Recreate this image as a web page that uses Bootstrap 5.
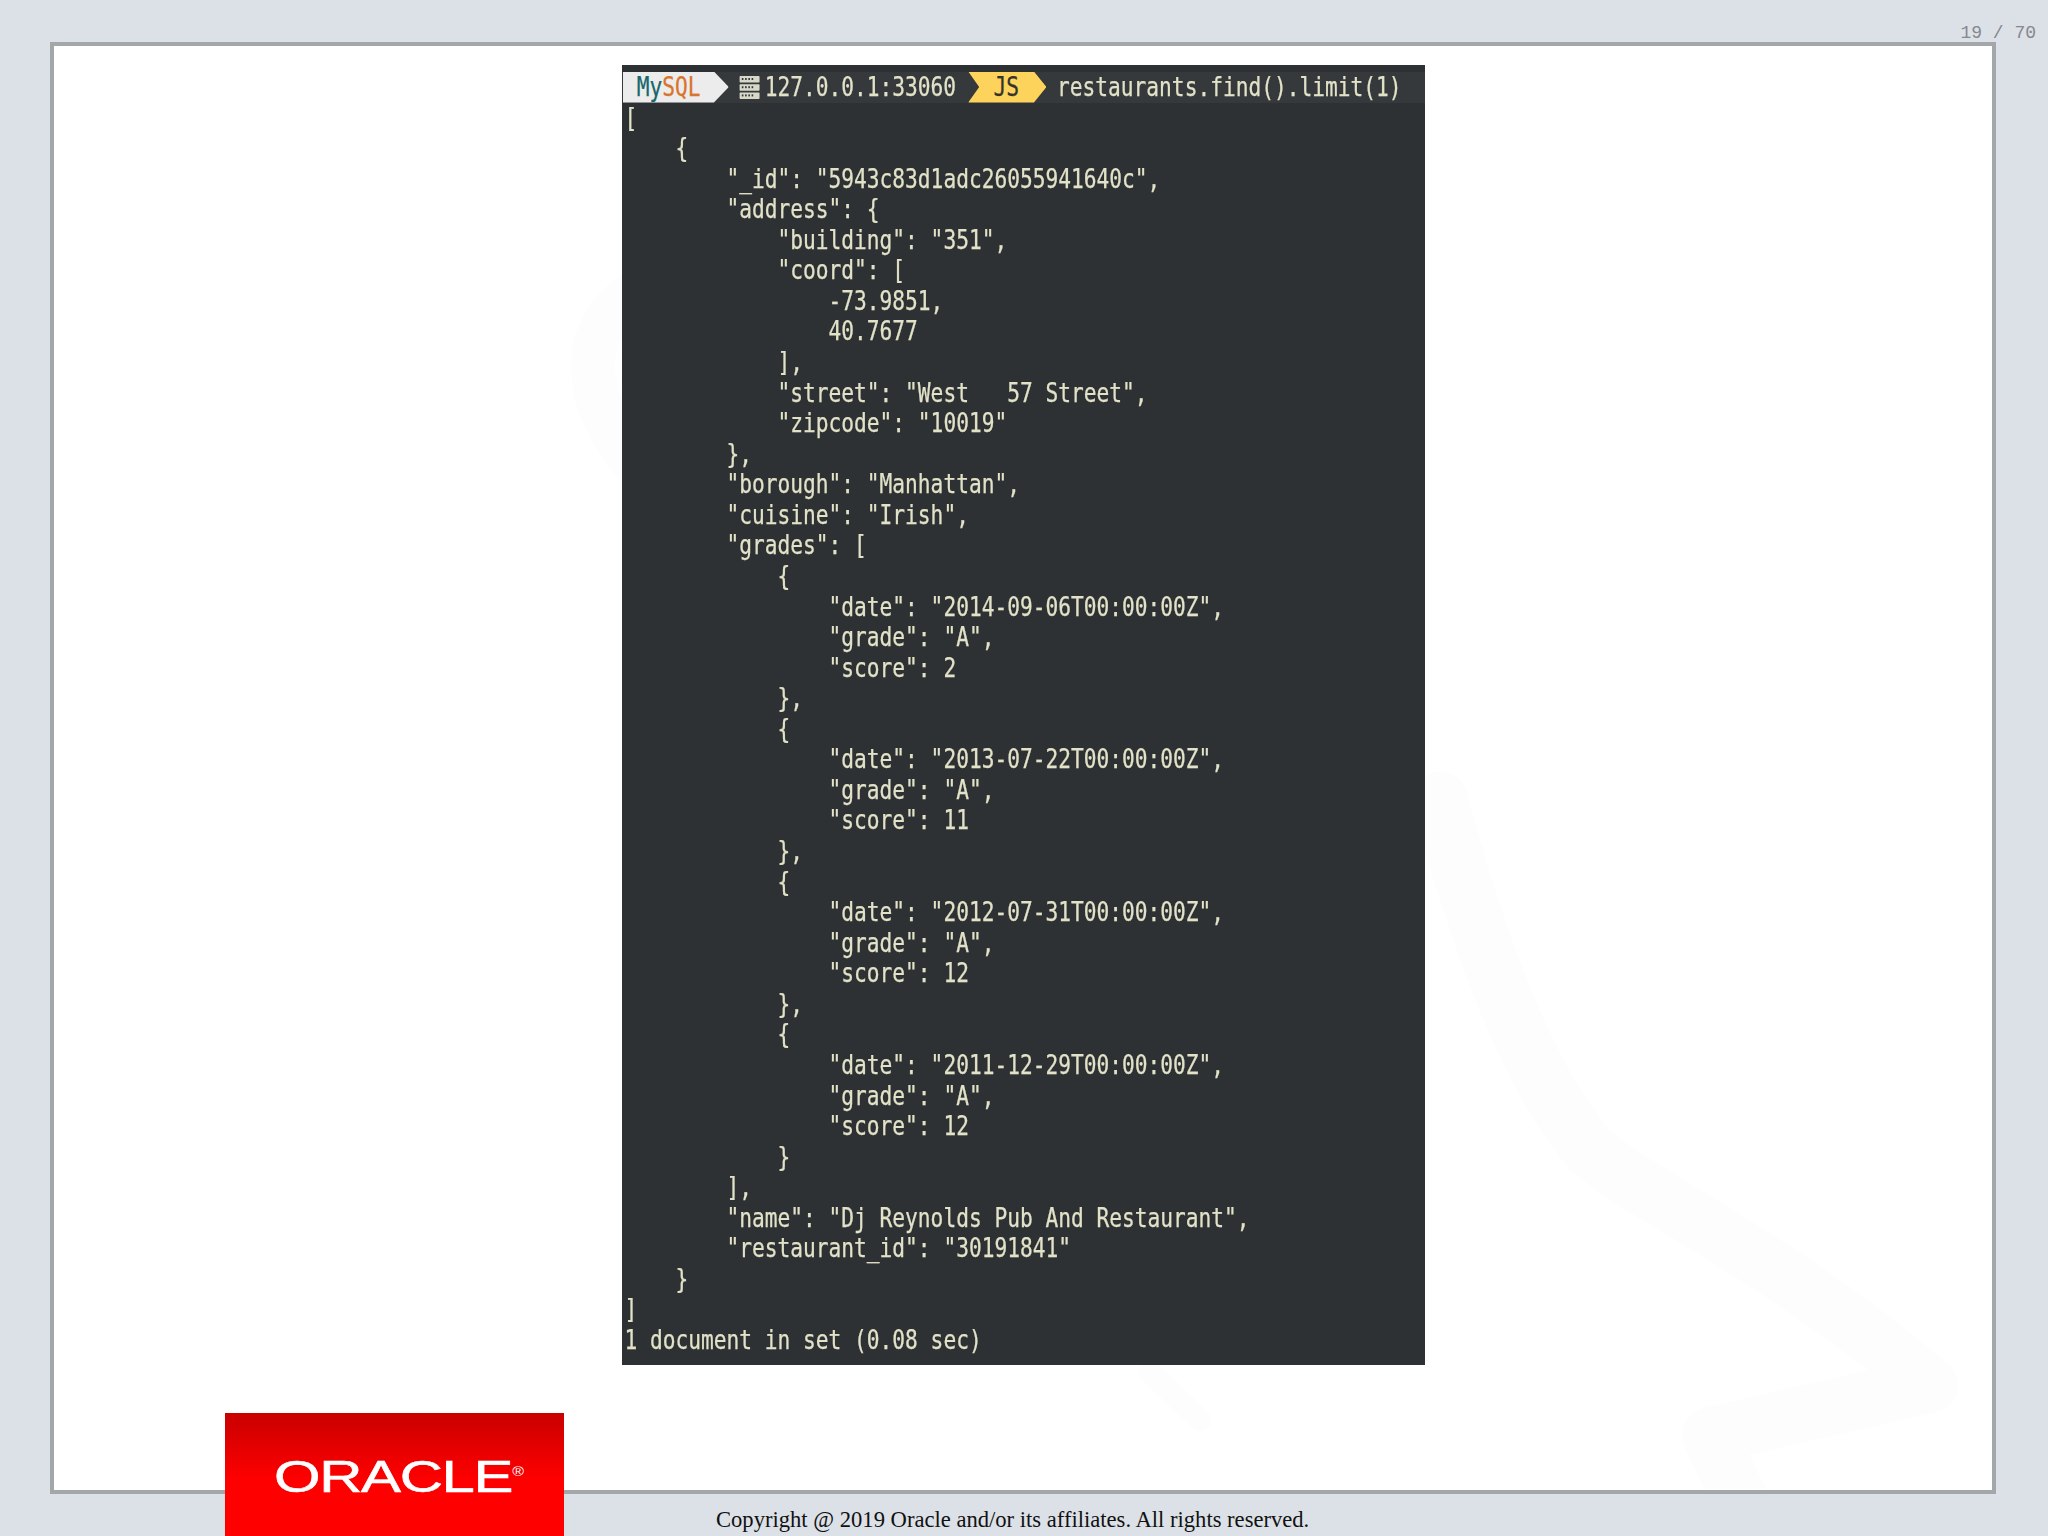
<!DOCTYPE html>
<html lang="en">
<head>
<meta charset="utf-8">
<title>Slide 19</title>
<link href="https://cdn.jsdelivr.net/npm/bootstrap@5.3.0/dist/css/bootstrap.min.css" rel="stylesheet">
<style>
html,body{height:1536px;overflow:hidden}
body{background:#dce0e7;padding:0 0 0 50px;width:2048px}
.page-no{height:42px;width:1986px;padding:23px 0 0 0;font:18px/20px "Liberation Mono",monospace;color:#85888c;white-space:nowrap;text-align:right}
.slide-frame{position:relative;width:1946px;height:1452px;background:#fff;border:4.5px solid #a4a7aa;padding-top:18.5px}
.wmark{position:absolute;left:0;top:0;width:1937px;height:1443px}
.term{position:relative;width:803px;height:1300px;background:#2e3134;overflow:hidden}
.term-inner{width:986px;transform:scaleX(.815);transform-origin:0 0;font:26px/30.56px "DejaVu Sans Mono",monospace;color:#e2e2c8;-webkit-text-stroke:.25px #e2e2c8;filter:blur(.4px)}
.prompt{height:31px;margin-top:7px;background:#36393c;white-space:pre}
.seg-my{width:130px;height:31px;margin-left:1px;padding-left:17px;background:#ececec;clip-path:polygon(0 0,86% 0,100% 50%,86% 100%,0 100%)}
.c-my{color:#17666c;-webkit-text-stroke:.25px #17666c}.c-sql{color:#d9742c;-webkit-text-stroke:.25px #d9742c}
.srv{width:25px;height:25px;margin:0 6px 0 13px}
.seg-js{width:96px;height:31px;margin:0 13px 0 15px;padding-left:31px;background:#fdd35c;color:#33332c;-webkit-text-stroke:.25px #33332c;clip-path:polygon(0 0,84% 0,100% 50%,84% 100%,0 100%,14% 50%)}
.code-out{margin:0;padding:0 0 0 3px;font:inherit;color:inherit;overflow:visible;white-space:pre}
.brand{position:absolute;left:170.5px;top:1366.5px;width:339px;height:123px;background:linear-gradient(#c90000,#f00 55%);overflow:hidden;z-index:2}
.brand-word{margin:47px 0 0 49.5px;height:34px;font:400 45px/34px "Liberation Sans",sans-serif;color:#fff;-webkit-text-stroke:.6px #fff;transform:scaleX(1.33);transform-origin:0 50%;letter-spacing:-1px;white-space:nowrap}
.brand-word sup{font-size:12px;top:-1.3em;margin-left:0;letter-spacing:0;-webkit-text-stroke:0}
.copy{width:1946px;padding:10.5px 0 0 666px;font:22.6px/30px "Liberation Serif",serif;color:#111;white-space:nowrap}
</style>
</head>
<body>
<div class="page-no">19 / 70</div>
<div class="slide-frame">
  <svg class="wmark" viewBox="54 46 1937 1443" aria-hidden="true">
    <g fill="none" stroke="#fdfdfe" stroke-linejoin="round" stroke-linecap="round">
      <path stroke-width="56" d="M1440 800 C1480 950 1530 1080 1590 1150 C1640 1195 1770 1250 1930 1385 L1710 1435 L1740 1500"/>
      <path stroke-width="44" d="M640 290 C585 320 570 390 640 470"/>
      <path stroke-width="22" d="M1150 1372 L1200 1420"/>
    </g>
  </svg>
  <div class="term mx-auto">
    <div class="term-inner">
      <div class="prompt d-flex align-items-center">
        <div class="seg-my"><span class="c-my">My</span><span class="c-sql">SQL</span></div>
        <svg class="srv" viewBox="0 0 25 25" aria-hidden="true"><g fill="#d8d8c8"><rect x="0" y="1" width="25" height="6.5" rx="1"/><rect x="0" y="9.2" width="25" height="6.5" rx="1"/><rect x="0" y="17.4" width="25" height="6.5" rx="1"/></g><g fill="#36393c"><rect x="3" y="3" width="2" height="2"/><rect x="7" y="3" width="2" height="2"/><rect x="11" y="3" width="2" height="2"/><rect x="15" y="3" width="2" height="2"/><rect x="3" y="11.2" width="2" height="2"/><rect x="7" y="11.2" width="2" height="2"/><rect x="11" y="11.2" width="2" height="2"/><rect x="15" y="11.2" width="2" height="2"/><rect x="3" y="19.4" width="2" height="2"/><rect x="7" y="19.4" width="2" height="2"/><rect x="11" y="19.4" width="2" height="2"/><rect x="15" y="19.4" width="2" height="2"/></g></svg>
        <span>127.0.0.1:33060</span>
        <div class="seg-js">JS</div>
        <span>restaurants.find().limit(1)</span>
      </div>
<pre class="code-out">[
    {
        "_id": "5943c83d1adc26055941640c",
        "address": {
            "building": "351",
            "coord": [
                -73.9851,
                40.7677
            ],
            "street": "West   57 Street",
            "zipcode": "10019"
        },
        "borough": "Manhattan",
        "cuisine": "Irish",
        "grades": [
            {
                "date": "2014-09-06T00:00:00Z",
                "grade": "A",
                "score": 2
            },
            {
                "date": "2013-07-22T00:00:00Z",
                "grade": "A",
                "score": 11
            },
            {
                "date": "2012-07-31T00:00:00Z",
                "grade": "A",
                "score": 12
            },
            {
                "date": "2011-12-29T00:00:00Z",
                "grade": "A",
                "score": 12
            }
        ],
        "name": "Dj Reynolds Pub And Restaurant",
        "restaurant_id": "30191841"
    }
]
1 document in set (0.08 sec)</pre>
    </div>
  </div>
  <div class="brand"><div class="brand-word">ORACLE<sup>®</sup></div></div>
</div>
<div class="copy">Copyright @ 2019 Oracle and/or its affiliates. All rights reserved.</div>
<script src="https://cdn.jsdelivr.net/npm/bootstrap@5.3.0/dist/js/bootstrap.bundle.min.js"></script>
</body>
</html>
